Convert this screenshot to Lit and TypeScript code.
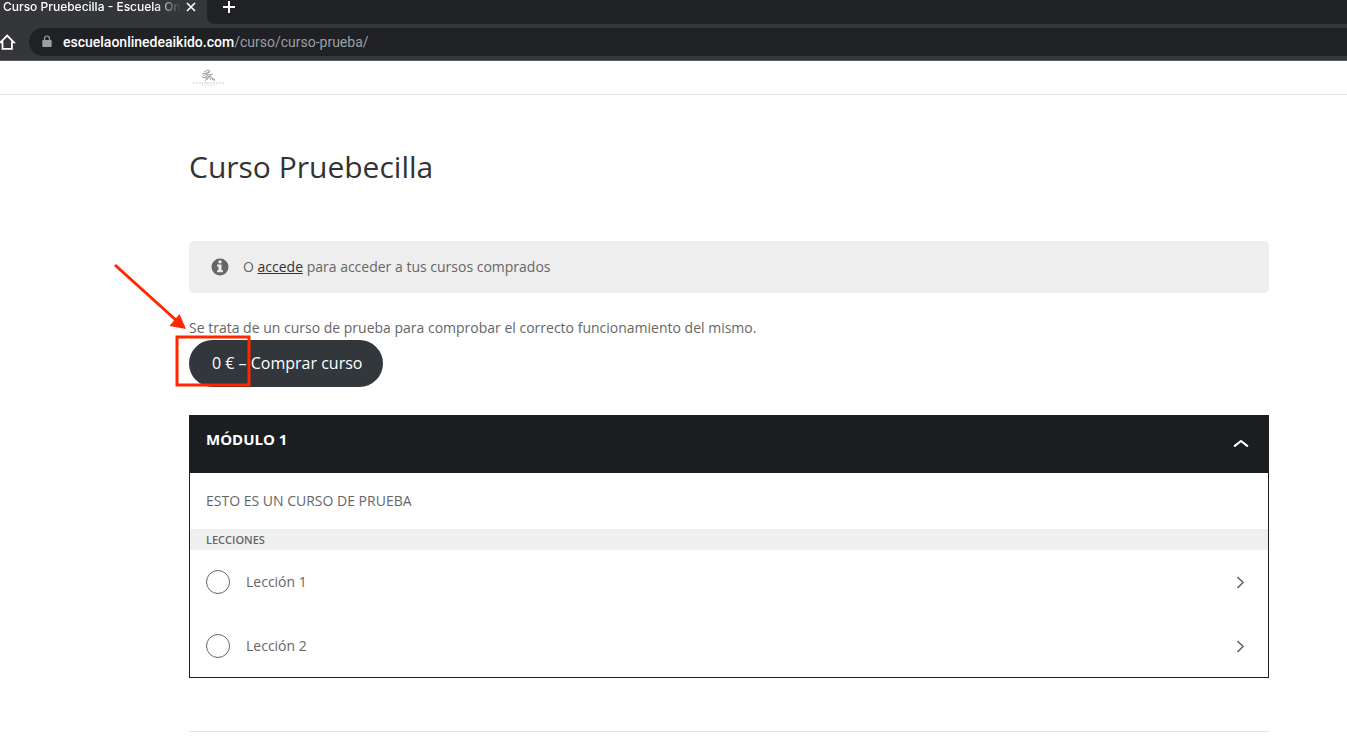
import { LitElement, html, css, svg } from "lit";
import { customElement, property } from "lit/decorators.js";

@customElement("browser-bar")
class BrowserBar extends LitElement {
  static styles = css`
    :host {
      display: block;
      font-family: Roboto, "Liberation Sans", sans-serif;
      background: #35363a;
      color: #fff;
      border-bottom: 1px solid #5d5e62;
    }
    .tabs {
      display: flex;
      height: 24px;
    }
    .tab {
      display: flex;
      align-items: center;
      justify-content: space-between;
      box-sizing: border-box;
      width: 207px;
      height: 14px;
      padding: 0 11px 0 3px;
      flex: none;
    }
    .title {
      white-space: nowrap;
      font-family: Inter, "Liberation Sans", sans-serif;
      font-size: 12px;
      font-weight: 500;
      line-height: 14px;
      -webkit-mask-image: linear-gradient(90deg, #000 152px, transparent 178px);
      mask-image: linear-gradient(90deg, #000 152px, transparent 178px);
    }
    .strip {
      flex: 1;
      padding-left: 15px;
      background: #202124;
      border-bottom-left-radius: 8px;
    }
    button {
      display: block;
      padding: 0;
      border: 0;
      background: none;
      color: inherit;
    }
    svg {
      display: block;
    }
    .toolbar {
      display: flex;
      align-items: center;
      gap: 13px;
      padding: 4px 0;
    }
    .address {
      display: flex;
      align-items: center;
      flex: 1;
      height: 28px;
      padding-left: 13px;
      gap: 11px;
      background: #202124;
      border-radius: 14px 0 0 14px;
      font-size: 14px;
      font-weight: 500;
      line-height: 20px;
    }
    .path {
      color: #9aa0a6;
      font-weight: 400;
    }
  `;

  render() {
    return html`
      <div class="tabs">
        <div class="tab">
          <span class="title">Curso Pruebecilla - Escuela On</span>
          <button aria-label="Cerrar pestaña">
            <svg width="10" height="10" viewBox="0 0 10 10" fill="none" stroke="currentColor" stroke-width="1.6">
              <path d="M1 1l8 8M9 1l-8 8" />
            </svg>
          </button>
        </div>
        <div class="strip">
          <button aria-label="Nueva pestaña">
            <svg width="14" height="14" viewBox="0 0 14 14" fill="none" stroke="currentColor" stroke-width="2">
              <path d="M1 7h12M7 1v12" />
            </svg>
          </button>
        </div>
      </div>
      <div class="toolbar">
        <button aria-label="Inicio">
          <svg width="16" height="18" viewBox="0 0 16 18" fill="none" stroke="currentColor" stroke-width="1.800">
            <path d="M0.500 9.300L7.200 2.500l6.700 6.800h-2v6.500H2.500V9.300z" />
          </svg>
        </button>
        <div class="address">
          <svg width="10" height="14" viewBox="0 0 10 14" fill="#9aa0a6">
            <path d="M1.300 5h7.400a1 1 0 0 1 1 1v5a1 1 0 0 1-1 1H1.300a1 1 0 0 1-1-1V6a1 1 0 0 1 1-1z" />
            <path d="M2.500 6V3.500a2.500 2.500 0 0 1 5 0V6" fill="none" stroke="#9aa0a6" stroke-width="1.200" />
          </svg>
          <span>escuelaonlinedeaikido.com<span class="path">/curso/curso-prueba/</span></span>
        </div>
      </div>
    `;
  }
}

@customElement("course-module")
class CourseModule extends LitElement {
  @property() heading = "";
  @property() summary = "";
  @property({ attribute: false }) lessons: string[] = [];

  static styles = css`
    :host {
      display: block;
      border: 1px solid #1a1e21;
      color: #666;
      font-size: 14px;
      line-height: 24px;
    }
    .head {
      display: flex;
      justify-content: space-between;
      align-items: flex-start;
      box-sizing: border-box;
      width: 100%;
      height: 57px;
      padding: 11px 19px 11px 16px;
      border: 0;
      background: #1a1e21;
      color: #fff;
      font: inherit;
      font-size: 15px;
      font-weight: 700;
    }
    .head svg {
      margin-top: 11px;
    }
    .summary {
      margin: 0;
      padding: 16px;
    }
    .label {
      margin: 0;
      padding: 0 16px;
      background: #efefef;
      font-size: 11px;
      font-weight: 600;
      line-height: 21px;
    }
    ul {
      margin: 0;
      padding: 0;
      list-style: none;
    }
    a {
      display: flex;
      align-items: center;
      gap: 16px;
      height: 64px;
      padding: 0 23px 0 16px;
      color: inherit;
      text-decoration: none;
    }
    li:last-child a {
      height: 63px;
    }
    .mark {
      box-sizing: border-box;
      width: 24px;
      height: 24px;
      border: 1px solid #666;
      border-radius: 50%;
    }
    .name {
      flex: 1;
    }
  `;

  render() {
    return html`
      <button class="head" aria-expanded="true">
        ${this.heading}
        <svg width="16" height="10" viewBox="0 0 16 10" fill="none" stroke="currentColor" stroke-width="2.200">
          <path d="M1.800 7.800L8 3l6.200 4.800" stroke-linecap="round" stroke-linejoin="round" />
        </svg>
      </button>
      <p class="summary">${this.summary}</p>
      <h3 class="label">LECCIONES</h3>
      <ul>
        ${this.lessons.map(
          (lesson) => html`
            <li>
              <a href="#">
                <span class="mark"></span>
                <span class="name">${lesson}</span>
                <svg width="9" height="14" viewBox="0 0 9 14" fill="none" stroke="currentColor" stroke-width="1.600">
                  <path d="M1.500 2L7 7.500 1.500 13" />
                </svg>
              </a>
            </li>
          `
        )}
      </ul>
    `;
  }
}

@customElement("app-root")
class AppRoot extends LitElement {
  static styles = css`
    :host {
      display: block;
      position: relative;
      min-height: 100vh;
      overflow: hidden;
      background: #fff;
      color: #666;
      font-family: "Open Sans", sans-serif;
      font-size: 14px;
      line-height: 24px;
    }
    svg {
      display: block;
    }
    header {
      padding: 8px 78px 8px 193px;
      border-bottom: 1px solid #e2e2e2;
    }
    main {
      padding: 54px 78px 0 189px;
    }
    h1 {
      margin: 0 0 56px;
      color: #333;
      font-size: 30px;
      font-weight: 400;
      line-height: 36px;
    }
    .notice {
      display: flex;
      align-items: center;
      gap: 14px;
      padding: 14px 22px;
      border-radius: 5px;
      background: #eee;
    }
    .notice a {
      color: #333;
      text-decoration: underline;
    }
    .intro {
      margin: 23px 0 0;
    }
    .buy {
      display: block;
      margin-bottom: 28px;
      padding: 0 21px 2px 23px;
      height: 47px;
      border: 0;
      border-radius: 24px;
      background: #32373c;
      color: #fff;
      font: inherit;
      font-size: 16px;
    }
    .end {
      margin: 53px 0 0;
      border: 0;
      border-top: 1px solid #e2e2e2;
    }
    .annotation {
      position: absolute;
      left: 110px;
      top: 260px;
      pointer-events: none;
    }
  `;

  private logo() {
    return svg`
      <g fill="none" stroke="#999" stroke-width="0.900">
        <path d="M11 3l4-2 2 1-3 2M9 5l5-1 3-1M10 7l3-2 4 1 3-1M12 8l3-2M9 8l4 1 3-2M14 11l2-4 2 4M12 12l2-3M17 6l2 3 3 2M19 9l1 2h2" />
      </g>
      <path d="M0 14h10M17 14h14" stroke="#ccc" stroke-dasharray="2 1" />
      <path d="M11 14h5" stroke="#eac4c0" />
      <path d="M8 16h15" stroke="#e4e0e0" stroke-dasharray="2 1" />
    `;
  }

  render() {
    return html`
      <browser-bar></browser-bar>
      <header>
        <svg width="31" height="17" viewBox="0 0 31 17" role="img" aria-label="Escuela Online de Aikido">${this.logo()}</svg>
      </header>
      <main>
        <h1>Curso Pruebecilla</h1>
        <div class="notice">
          <svg width="18" height="18" viewBox="0 0 18 18">
            <circle cx="9" cy="9" r="8.500" fill="#666" />
            <path d="M7.500 2.500h3v2.700h-3zM6 6.500h4.500v5.700H12v2.100H6v-2.100h1.500V8.600H6z" fill="#eee" />
          </svg>
          <span>O <a href="#">accede</a> para acceder a tus cursos comprados</span>
        </div>
        <p class="intro">Se trata de un curso de prueba para comprobar el correcto funcionamiento del mismo.</p>
        <button class="buy">0 € – Comprar curso</button>
        <course-module
          heading="MÓDULO 1"
          summary="ESTO ES UN CURSO DE PRUEBA"
          .lessons=${["Lección 1", "Lección 2"]}
        ></course-module>
        <hr class="end" />
      </main>
      <svg class="annotation" width="142" height="128" viewBox="0 0 142 128" fill="none" stroke="#ff2600">
        <path d="M5 5l62 56" stroke-width="3" />
        <path d="M76 69L59.500 66l10-12z" fill="#ff2600" stroke="none" />
        <rect x="67" y="77" width="72" height="48" stroke-width="3" />
      </svg>
    `;
  }
}
